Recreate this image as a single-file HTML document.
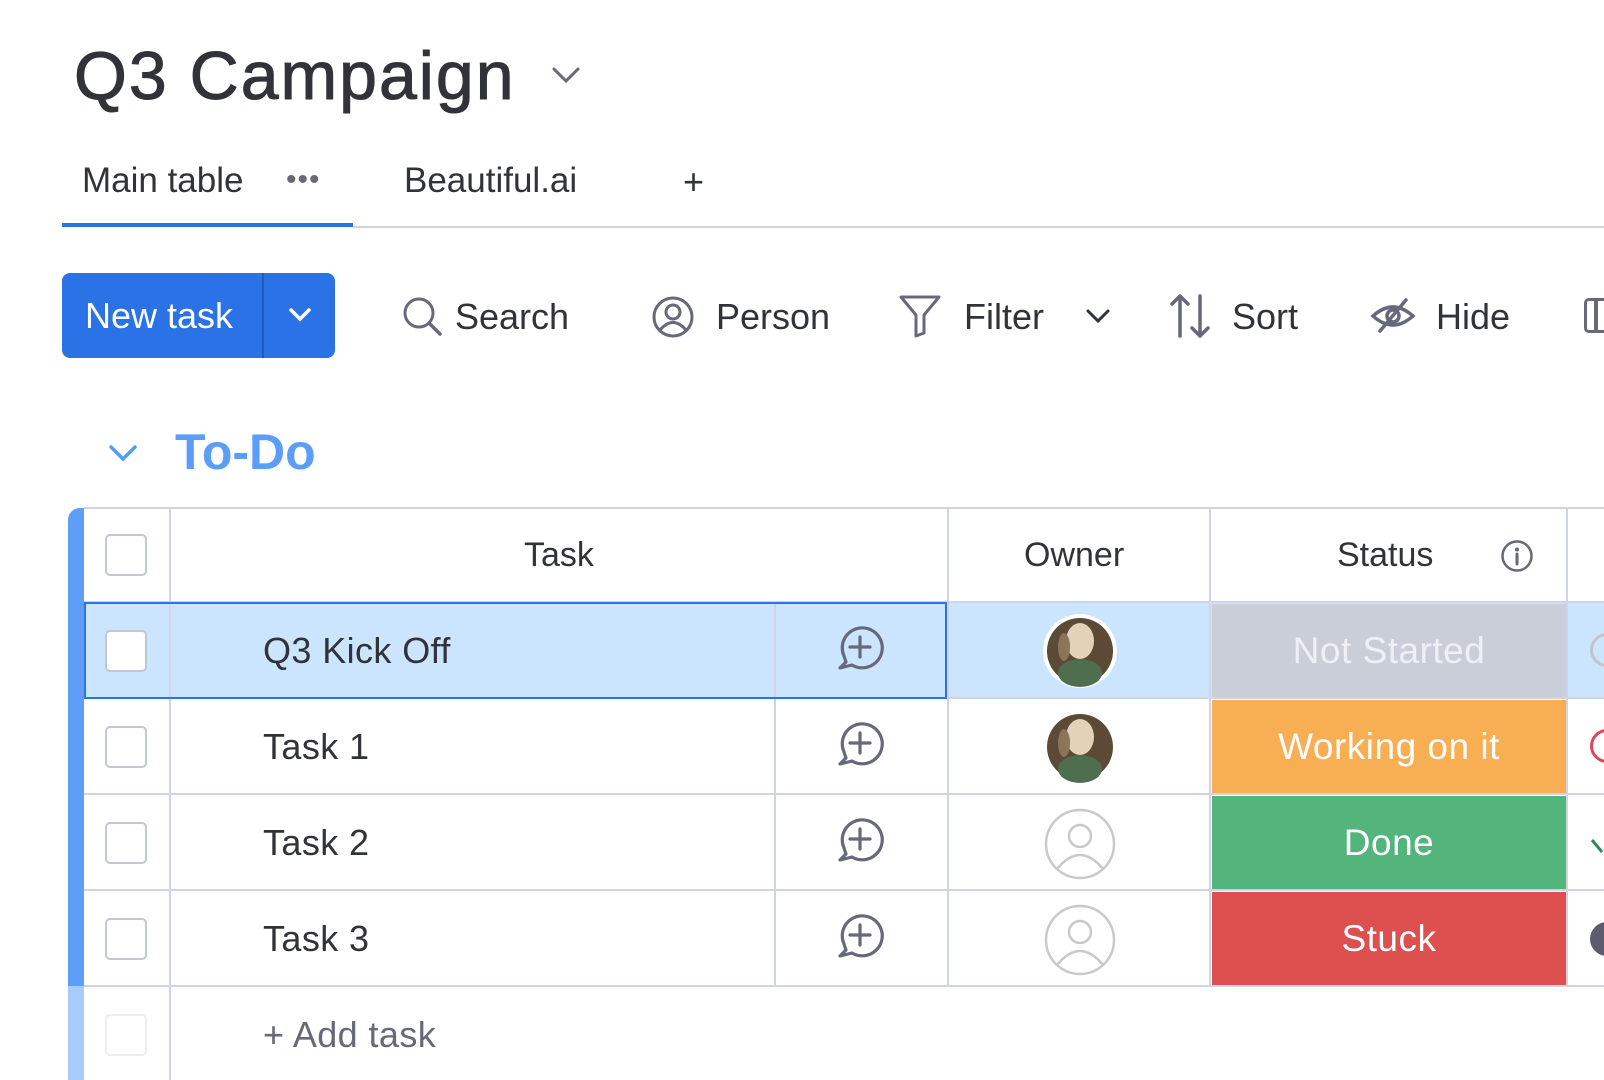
<!DOCTYPE html>
<html><head><meta charset="utf-8"><style>
*{margin:0;padding:0;box-sizing:border-box}
body{width:1604px;height:1080px;overflow:hidden;background:#fff;font-family:"Liberation Sans",sans-serif;color:#323338;position:relative}
.a{position:absolute}
.t{position:absolute;white-space:nowrap;line-height:1}
.hl{position:absolute;height:2px;background:#d0d4e4}
.vl{position:absolute;width:2px;background:#d0d4e4}
.cb{position:absolute;left:105px;width:42px;height:42px;border:2px solid #c3c6d4;border-radius:5px;background:#fff}
.st{position:absolute;left:1212px;width:354px;color:#fff;font-size:37px;letter-spacing:0.5px;display:flex;align-items:center;justify-content:center}
.rt{position:absolute;left:263px;font-size:36px;letter-spacing:0.4px;line-height:1;color:#323338}
</style></head><body>

<div class="t" style="left:74px;top:42px;font-size:68px;letter-spacing:2px;color:#323338;-webkit-text-stroke:1px #323338">Q3 Campaign</div>
<svg class="a" style="left:550px;top:63px" width="32" height="24" viewBox="0 0 32 24"><path d="M4 6 L16 18 L28 6" fill="none" stroke="#676879" stroke-width="3" stroke-linecap="round"/></svg>

<div class="t" style="left:82px;top:163px;font-size:35px">Main table</div>
<div class="t" style="left:286px;top:165px;font-size:30px;color:#676879;letter-spacing:1px">•••</div>
<div class="t" style="left:404px;top:163px;font-size:35px">Beautiful.ai</div>
<div class="t" style="left:683px;top:164px;font-size:36px;color:#323338">+</div>
<div class="a" style="left:62px;top:223px;width:291px;height:4px;background:#2b73e8"></div>
<div class="a" style="left:353px;top:226px;width:1251px;height:2px;background:#d0d4e4"></div>

<div class="a" style="left:62px;top:273px;width:273px;height:85px;background:#2a72e6;border-radius:8px"></div>
<div class="a" style="left:262px;top:273px;width:2px;height:85px;background:#1c5cc0"></div>
<div class="t" style="left:85px;top:298px;font-size:36px;color:#fff">New task</div>
<svg class="a" style="left:287px;top:306px" width="26" height="18" viewBox="0 0 26 18"><path d="M4 4 L13 13 L22 4" fill="none" stroke="#fff" stroke-width="3.5" stroke-linecap="round"/></svg>

<!-- toolbar -->
<svg class="a" style="left:400px;top:294px" width="44" height="44" viewBox="0 0 44 44"><circle cx="19" cy="19" r="14" fill="none" stroke="#676879" stroke-width="3"/><path d="M29 29 L40 40" stroke="#676879" stroke-width="3.5" stroke-linecap="round"/></svg>
<div class="t" style="left:455px;top:299px;font-size:36px">Search</div>
<svg class="a" style="left:651px;top:295px" width="44" height="44" viewBox="0 0 44 44"><circle cx="22" cy="22" r="19" fill="none" stroke="#676879" stroke-width="3"/><circle cx="22" cy="17" r="7" fill="none" stroke="#676879" stroke-width="3"/><path d="M9 35 Q22 20 35 35" fill="none" stroke="#676879" stroke-width="3"/></svg>
<div class="t" style="left:716px;top:299px;font-size:36px">Person</div>
<svg class="a" style="left:898px;top:293px" width="44" height="46" viewBox="0 0 44 46"><path d="M3 4 H41 L26 22 V40 L18 43 V22 Z" fill="none" stroke="#676879" stroke-width="3" stroke-linejoin="round"/></svg>
<div class="t" style="left:964px;top:299px;font-size:36px">Filter</div>
<svg class="a" style="left:1085px;top:308px" width="26" height="16" viewBox="0 0 26 16"><path d="M3 3 L13 13 L23 3" fill="none" stroke="#323338" stroke-width="3" stroke-linecap="round"/></svg>
<svg class="a" style="left:1170px;top:292px" width="40" height="48" viewBox="0 0 40 48"><path d="M10 44 V4 M2 12 L10 4 L18 12" fill="none" stroke="#676879" stroke-width="3.5" stroke-linecap="round" stroke-linejoin="round"/><path d="M30 4 V44 M22 36 L30 44 L38 36" fill="none" stroke="#676879" stroke-width="3.5" stroke-linecap="round" stroke-linejoin="round"/></svg>
<div class="t" style="left:1232px;top:299px;font-size:36px">Sort</div>
<svg class="a" style="left:1370px;top:296px" width="46" height="40" viewBox="0 0 46 40"><path d="M3 20 Q23 2 43 20 Q23 38 3 20 Z" fill="none" stroke="#676879" stroke-width="3.5"/><circle cx="23" cy="20" r="6" fill="none" stroke="#676879" stroke-width="3.5"/><path d="M10 35 L36 4" stroke="#676879" stroke-width="3.5" stroke-linecap="round"/></svg>
<div class="t" style="left:1436px;top:299px;font-size:36px">Hide</div>
<div class="a" style="left:1584px;top:298px;width:40px;height:35px;border:3.5px solid #676879;border-radius:5px"></div>
<div class="a" style="left:1594px;top:298px;width:3.5px;height:35px;background:#676879"></div>

<!-- group -->
<svg class="a" style="left:107px;top:442px" width="32" height="22" viewBox="0 0 32 22"><path d="M4 5 L16 17 L28 5" fill="none" stroke="#579bfc" stroke-width="3.5" stroke-linecap="round"/></svg>
<div class="t" style="left:175px;top:427px;font-size:50px;font-weight:bold;color:#5b9df7">To-Do</div>

<!-- table -->
<div class="a" style="left:68px;top:508px;width:16px;height:478px;background:#5f9ef8;border-top-left-radius:12px"></div>
<div class="a" style="left:68px;top:986px;width:16px;height:94px;background:#a8cbfc"></div>

<div class="a" style="left:84px;top:603px;width:1520px;height:96px;background:#cce5ff"></div>

<div class="st" style="top:604px;height:94px;background:#c9ced8;color:#eef0f5">Not Started</div>
<div class="st" style="top:700px;height:94px;background:#f8ae52">Working on it</div>
<div class="st" style="top:796px;height:94px;background:#53b57c">Done</div>
<div class="st" style="top:892px;height:94px;background:#de4f4f">Stuck</div>

<div class="hl" style="left:84px;top:507px;width:1520px"></div>
<div class="hl" style="left:84px;top:601px;width:1520px"></div>
<div class="hl" style="left:84px;top:697px;width:1520px"></div>
<div class="hl" style="left:84px;top:793px;width:1520px"></div>
<div class="hl" style="left:84px;top:889px;width:1520px"></div>
<div class="hl" style="left:84px;top:985px;width:1520px"></div>
<div class="vl" style="left:169px;top:508px;height:572px"></div>
<div class="vl" style="left:774px;top:602px;height:384px"></div>
<div class="vl" style="left:947px;top:508px;height:478px"></div>
<div class="vl" style="left:1209px;top:508px;height:478px"></div>
<div class="vl" style="left:1566px;top:508px;height:478px"></div>

<div class="a" style="left:84px;top:602px;width:863px;height:97px;border:2px solid #2b73e8"></div>

<!-- header -->
<div class="cb" style="top:534px"></div>
<div class="t" style="left:524px;top:538px;font-size:34px">Task</div>
<div class="t" style="left:1024px;top:538px;font-size:34px">Owner</div>
<div class="t" style="left:1337px;top:538px;font-size:34px">Status</div>
<svg class="a" style="left:1500px;top:539px" width="34" height="34" viewBox="0 0 34 34"><circle cx="17" cy="17" r="14.5" fill="none" stroke="#676879" stroke-width="2.5"/><circle cx="17" cy="10.5" r="2" fill="#676879"/><path d="M17 15 V25" stroke="#676879" stroke-width="3" stroke-linecap="round"/></svg>

<!-- rows -->
<div class="cb" style="top:630px"></div>
<div class="cb" style="top:726px"></div>
<div class="cb" style="top:822px"></div>
<div class="cb" style="top:918px"></div>
<div class="cb" style="top:1014px;border-color:#eceef4"></div>
<div class="rt" style="top:633px">Q3 Kick Off</div>
<div class="rt" style="top:729px">Task 1</div>
<div class="rt" style="top:825px">Task 2</div>
<div class="rt" style="top:921px">Task 3</div>
<div class="rt" style="top:1017px;color:#676879">+ Add task</div>

<svg class="a" style="left:836px;top:624px" width="48" height="48" viewBox="0 0 48 48"><path d="M10 38 L4 44 L16 41 A20 20 0 1 0 8 32 Z" fill="none" stroke="#676879" stroke-width="3.2" stroke-linejoin="round"/><path d="M24 13 V33 M14 23 H34" stroke="#676879" stroke-width="3.2" stroke-linecap="round"/></svg>
<svg class="a" style="left:836px;top:720px" width="48" height="48" viewBox="0 0 48 48"><path d="M10 38 L4 44 L16 41 A20 20 0 1 0 8 32 Z" fill="none" stroke="#676879" stroke-width="3.2" stroke-linejoin="round"/><path d="M24 13 V33 M14 23 H34" stroke="#676879" stroke-width="3.2" stroke-linecap="round"/></svg>
<svg class="a" style="left:836px;top:816px" width="48" height="48" viewBox="0 0 48 48"><path d="M10 38 L4 44 L16 41 A20 20 0 1 0 8 32 Z" fill="none" stroke="#676879" stroke-width="3.2" stroke-linejoin="round"/><path d="M24 13 V33 M14 23 H34" stroke="#676879" stroke-width="3.2" stroke-linecap="round"/></svg>
<svg class="a" style="left:836px;top:912px" width="48" height="48" viewBox="0 0 48 48"><path d="M10 38 L4 44 L16 41 A20 20 0 1 0 8 32 Z" fill="none" stroke="#676879" stroke-width="3.2" stroke-linejoin="round"/><path d="M24 13 V33 M14 23 H34" stroke="#676879" stroke-width="3.2" stroke-linecap="round"/></svg>

<svg class="a" style="left:1042px;top:613px" width="76" height="76" viewBox="0 0 76 76"><circle cx="38" cy="38" r="37" fill="#fff"/><circle cx="38" cy="38" r="33" fill="#5a4a36"/><ellipse cx="38" cy="28" rx="14" ry="18" fill="#e3d2b8"/><ellipse cx="38" cy="60" rx="22" ry="14" fill="#4f6e4d"/><ellipse cx="22" cy="34" rx="6" ry="14" fill="#8a7558"/></svg>
<svg class="a" style="left:1042px;top:709px" width="76" height="76" viewBox="0 0 76 76"><circle cx="38" cy="38" r="37" fill="#fff"/><circle cx="38" cy="38" r="33" fill="#5a4a36"/><ellipse cx="38" cy="28" rx="14" ry="18" fill="#e3d2b8"/><ellipse cx="38" cy="60" rx="22" ry="14" fill="#4f6e4d"/><ellipse cx="22" cy="34" rx="6" ry="14" fill="#8a7558"/></svg>
<svg class="a" style="left:1043px;top:807px" width="74" height="74" viewBox="0 0 74 74"><circle cx="37" cy="37" r="34" fill="#fff" stroke="#c8c9ce" stroke-width="2.5"/><circle cx="37" cy="29" r="11" fill="none" stroke="#c8c9ce" stroke-width="2.5"/><path d="M14 62 Q37 34 60 62" fill="none" stroke="#c8c9ce" stroke-width="2.5"/></svg>
<svg class="a" style="left:1043px;top:903px" width="74" height="74" viewBox="0 0 74 74"><circle cx="37" cy="37" r="34" fill="#fff" stroke="#c8c9ce" stroke-width="2.5"/><circle cx="37" cy="29" r="11" fill="none" stroke="#c8c9ce" stroke-width="2.5"/><path d="M14 62 Q37 34 60 62" fill="none" stroke="#c8c9ce" stroke-width="2.5"/></svg>

<div class="a" style="left:1590px;top:633px;width:34px;height:34px;border:3px solid #c4c4c4;border-radius:50%"></div>
<div class="a" style="left:1590px;top:729px;width:34px;height:34px;border:3px solid #e2445c;border-radius:50%"></div>
<svg class="a" style="left:1590px;top:836px" width="14" height="20"><path d="M2 4 L12 16" stroke="#2e8b57" stroke-width="3"/></svg>
<div class="a" style="left:1590px;top:922px;width:34px;height:34px;background:#5c5c6e;border-radius:50%"></div>

</body></html>
